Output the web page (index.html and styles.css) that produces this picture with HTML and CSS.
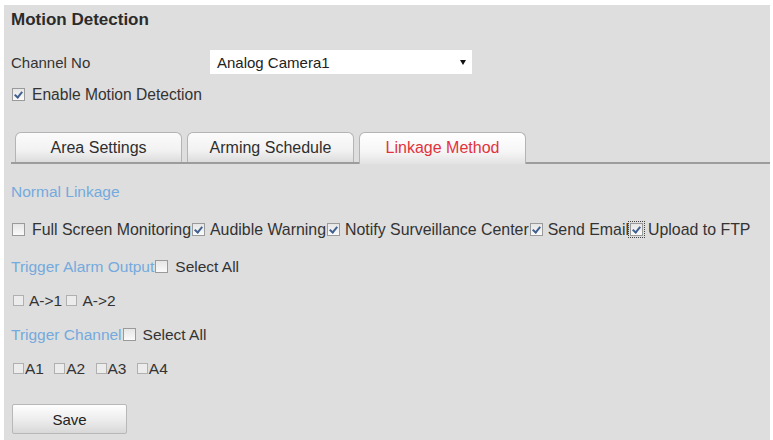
FILE: index.html
```html
<!DOCTYPE html>
<html lang="en">
<head>
    <meta charset="UTF-8">
    <title>Motion Detection</title>
    <link rel="stylesheet" href="styles.css">
</head>
<body>
    <div class="panel">
        <div class="title">Motion Detection</div>
        <div class="channel-row">
            <span class="label">Channel No</span>
            <div class="select">
                <span>Analog Camera1</span>
                <span class="arrow"></span>
            </div>
        </div>
        <div class="enable-row"><span class="cb on"></span>Enable Motion Detection</div>

        <div class="tabs">
            <div class="tab">Area Settings</div>
            <div class="tab">Arming Schedule</div>
            <div class="tab active">Linkage Method</div>
        </div>

        <div class="linkage">
            <div class="line heading">Normal Linkage</div>
            <div class="line opts"><span class="cb"></span>Full Screen Monitoring<span class="cb on"></span>Audible Warning<span class="cb on"></span>Notify Surveillance Center<span class="cb on"></span>Send Email<span class="cb on focus"></span>Upload to FTP</div>
            <div class="line group"><span class="heading">Trigger Alarm Output</span><span class="cb"></span>Select All</div>
            <div class="line items"><span class="cb"></span>A-&gt;1 <span class="cb"></span>A-&gt;2</div>
            <div class="line group"><span class="heading">Trigger Channel</span><span class="cb"></span>Select All</div>
            <div class="line items tight"><span class="cb"></span>A1 <span class="cb"></span>A2 <span class="cb"></span>A3 <span class="cb"></span>A4</div>
        </div>

        <button class="save">Save</button>
    </div>
</body>
</html>
```

FILE: styles.css
```css
html, body {
    margin: 0;
    background: #fff;
}
body {
    padding: 5px 3px 0 4px;
    font-family: "Liberation Sans", Arial, sans-serif;
    color: #333;
}
.panel {
    background: #dedede;
    height: 435px;
    padding: 5px 0 0 7px;
    box-sizing: border-box;
}
.title {
    font-size: 17px;
    font-weight: bold;
    line-height: 20px;
    color: #2b2b2b;
}
.channel-row {
    display: flex;
    align-items: center;
    margin-top: 20px;
    height: 24px;
    font-size: 15px;
}
.channel-row .label {
    width: 199px;
}
.select {
    width: 262px;
    height: 24px;
    background: #fff;
    display: flex;
    align-items: center;
    justify-content: space-between;
    padding: 0 6px 0 7px;
    box-sizing: border-box;
    color: #222;
}
.select .arrow {
    width: 0;
    height: 0;
    border-left: 3px solid transparent;
    border-right: 3px solid transparent;
    border-top: 5px solid #111;
}
.enable-row {
    margin-top: 11px;
    line-height: 20px;
    font-size: 15.6px;
}
.enable-row .cb {
    margin: 0 7px 0 1px;
}

/* checkbox look */
.cb {
    display: inline-block;
    width: 11px;
    height: 11px;
    border: 1px solid #9a9a9a;
    background: linear-gradient(#e6e6e6, #fafafa);
    position: relative;
    vertical-align: -1px;
}
.cb.on::after {
    content: "";
    position: absolute;
    left: 3px;
    top: 1px;
    width: 3px;
    height: 6px;
    border: solid #40618f;
    border-width: 0 2px 2px 0;
    transform: rotate(40deg);
}
.cb.focus {
    outline: 1px dotted #444;
    outline-offset: 1px;
}

/* tab strip */
.tabs {
    display: flex;
    gap: 5px;
    margin-top: 27px;
    padding-left: 4px;
    border-bottom: 2px solid #9c9c9c;
}
.tab {
    width: 167px;
    height: 30px;
    box-sizing: border-box;
    border: 1px solid #b4b4b4;
    border-bottom: none;
    border-radius: 6px 6px 0 0;
    background: linear-gradient(#fbfbfb, #f2f2f2 60%, #dcdcdc);
    font-size: 16px;
    line-height: 30px;
    text-align: center;
    color: #2e2e2e;
}
.tab.active {
    color: #e2333d;
    background: linear-gradient(#ffffff, #f6f6f6 60%, #e2e2e2);
    height: 32px;
    margin-bottom: -2px;
}

/* linkage options */
.linkage {
    margin-top: 18px;
    font-size: 15.5px;
}
.line {
    line-height: 20px;
    height: 20px;
    white-space: nowrap;
}
.heading {
    color: #74aadd;
}
.opts {
    margin-top: 18px;
    font-size: 15.9px;
    padding-left: 1px;
}
.opts .cb {
    margin: 0 5px 0 1px;
}
.opts .cb:first-child {
    margin-left: 0;
    margin-right: 7px;
}
.group {
    margin-top: 17px;
}
.group .cb {
    margin: 0 7px 0 1px;
}
.items {
    margin-top: 16px;
    padding-left: 2px;
}
.items .cb {
    width: 9px;
    height: 9px;
    margin-right: 5px;
    border-color: #b0b0b0;
    background: #ececec;
    vertical-align: 0;
}
.tight .cb {
    margin: 0 1px 0 6px;
}
.tight .cb:first-child {
    margin-left: 0;
}
.items + .group {
    margin-top: 14px;
}
.group + .items {
    margin-top: 14px;
}
.save {
    display: block;
    margin: 25px 0 0 1px;
    width: 115px;
    height: 30px;
    border: 1px solid #b8b8b8;
    border-radius: 2px;
    background: linear-gradient(#fefefe, #ececec 55%, #d8d8d8);
    font-family: "Liberation Sans", Arial, sans-serif;
    font-size: 15px;
    color: #222;
}
```
